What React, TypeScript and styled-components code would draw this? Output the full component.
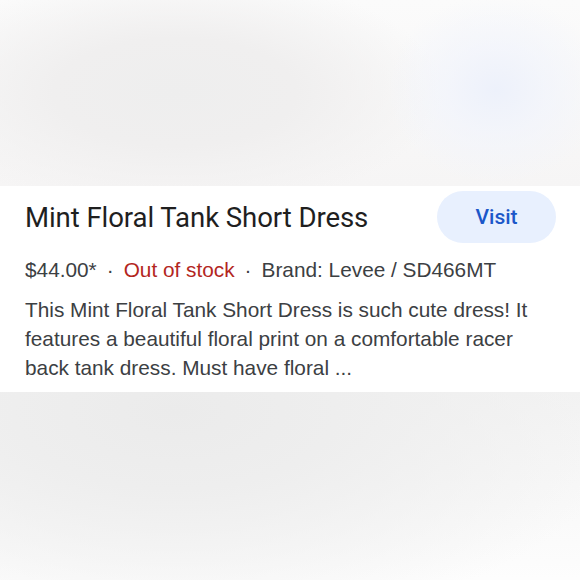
import styled, { createGlobalStyle } from 'styled-components'
import { FC } from 'react'

const GlobalStyle = createGlobalStyle`
  html, body {
    margin: 0;
    padding: 0;
    background: #fafafa;
  }
`

const Page = styled.div`
  width: 580px;
  height: 580px;
  display: flex;
  flex-direction: column;
  overflow: hidden;
  background: #fafafa;
`

const TopBlur = styled.div`
  height: 186px;
  flex-shrink: 0;
  background:
    radial-gradient(ellipse 110px 95px at 496px 90px, #edf1fb, rgba(241, 244, 252, 0.7) 45%, rgba(250, 250, 252, 0) 100%),
    radial-gradient(ellipse 270px 120px at 175px 92px, #eeeeee, #f0efef 45%, rgba(248, 247, 247, 0) 100%),
    linear-gradient(180deg, #fbfbfb, #f6f5f5);
`

const BottomBlur = styled.div`
  flex: 1;
  background:
    radial-gradient(ellipse 460px 220px at 175px 20px, #ebebeb, #eeeeee 35%, rgba(252, 252, 252, 0) 100%),
    linear-gradient(180deg, #f3f3f3, #fdfdfd);
`

const Card = styled.div`
  background: #ffffff;
  padding: 5px 24px 10px 25px;
  display: flex;
  flex-direction: column;
`

const TitleRow = styled.div`
  display: flex;
  align-items: center;
  justify-content: space-between;
`

const Title = styled.div`
  font-family: Roboto, 'Noto Sans', sans-serif;
  font-size: 27.6px;
  color: #1f1f1f;
  letter-spacing: -0.1px;
`

const VisitButton = styled.button`
  width: 119px;
  height: 52px;
  border: none;
  border-radius: 26px;
  background: #e8f0fe;
  color: #1b57c9;
  font-family: Roboto, 'Noto Sans', sans-serif;
  font-weight: 500;
  font-size: 21px;
  cursor: pointer;
`

const Meta = styled.div`
  margin-top: 13px;
  font-family: 'Liberation Sans', Arial, sans-serif;
  font-size: 20.8px;
  line-height: 28px;
  color: #3c4043;
`

const Dot = styled.span`
  margin: 0 10px;
`

const Stock = styled.span<{ $out?: boolean }>`
  color: ${(p) => (p.$out ? '#b3261e' : '#188038')};
`

const Description = styled.div`
  margin-top: 11px;
  padding-right: 6px;
  font-family: 'Liberation Sans', Arial, sans-serif;
  font-size: 20.8px;
  line-height: 29px;
  color: #3c4043;
`

const App: FC = () => {
  return (
    <Page>
      <GlobalStyle />
      <TopBlur />
      <Card>
        <TitleRow>
          <Title>Mint Floral Tank Short Dress</Title>
          <VisitButton>Visit</VisitButton>
        </TitleRow>
        <Meta>
          $44.00*
          <Dot>·</Dot>
          <Stock $out>Out of stock</Stock>
          <Dot>·</Dot>
          Brand: Levee / SD466MT
        </Meta>
        <Description>
          This Mint Floral Tank Short Dress is such cute dress! It features a beautiful floral print on a
          comfortable racer back tank dress. Must have floral ...
        </Description>
      </Card>
      <BottomBlur />
    </Page>
  )
}

export default App
